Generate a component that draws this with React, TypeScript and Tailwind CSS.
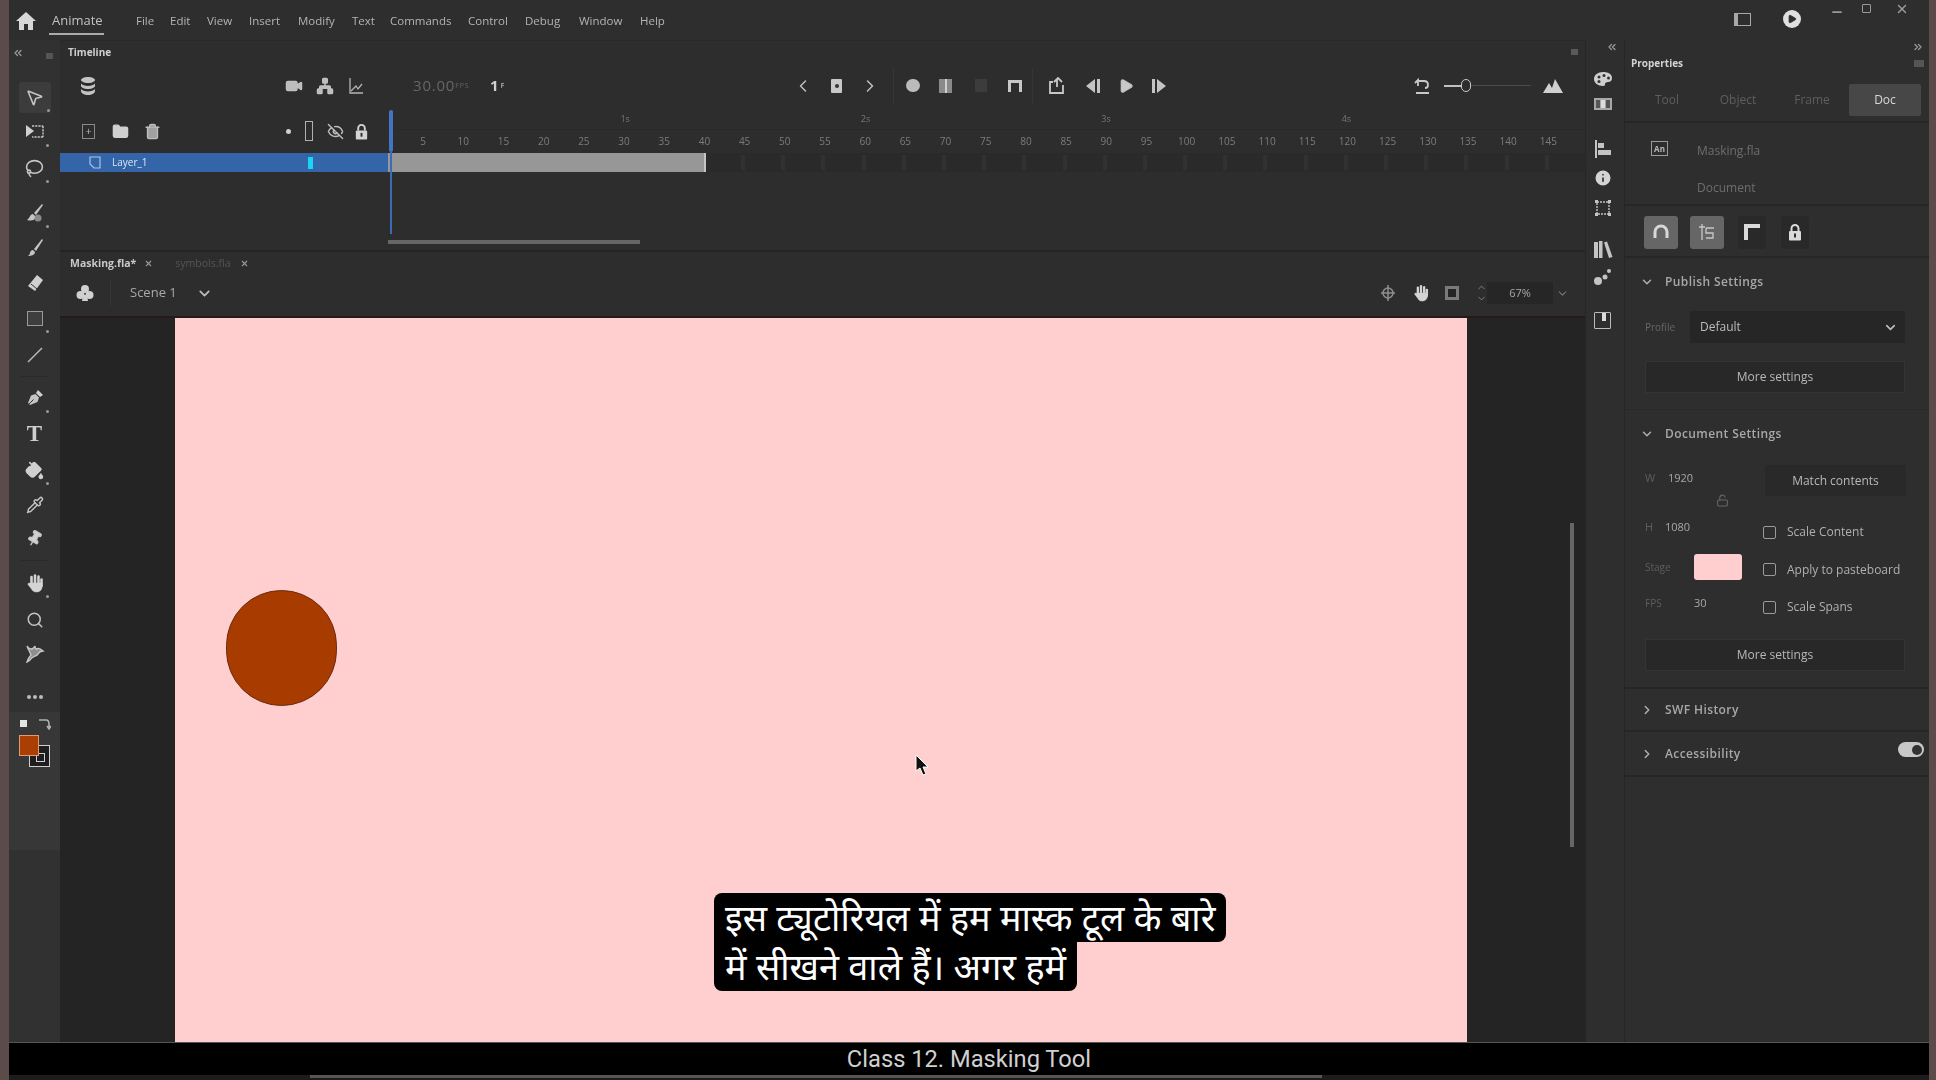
import {
  ChevronDown,
  ChevronLeft,
  ChevronRight,
  ChevronUp,
  ChevronsLeft,
  ChevronsRight,
  EyeOff,
  Folder,
  Info,
  Lasso,
  LockOpen,
  Minus,
  MousePointer2,
  Network,
  PaintBucket,
  Pin,
  Pipette,
  Play,
  Search,
  Trash2,
  Video,
  X,
} from "lucide-react"

const menus: [string, number][] = [
  ["File", 34],
  ["Edit", 37],
  ["View", 42],
  ["Insert", 49],
  ["Modify", 54],
  ["Text", 38],
  ["Commands", 78],
  ["Control", 57],
  ["Debug", 54],
  ["Window", 61],
  ["Help", 40],
]

const frameLabels = Array.from({ length: 29 }, (_, i) => (i + 1) * 5)
const seconds = ["1s", "2s", "3s", "4s"]
const ticks = Array.from({ length: 21 }, (_, i) => i)

function Tool({ gap, children, dot }: { gap: number; children: React.ReactNode; dot?: boolean }) {
  // gap = space above the 30px tool slot
  return (
    <div className="relative flex h-[30px] w-full shrink-0 items-center justify-center text-[#c4c4c4]" style={{ marginTop: gap }}>
      {children}
      {dot && <span className="absolute right-[11px] bottom-0 h-[3px] w-[3px] rounded-full bg-[#999]" />}
    </div>
  )
}

function BrushBlob() {
  return (
    <svg width="20" height="20" viewBox="0 0 20 20" fill="#c4c4c4">
      <path d="M17 1 9 10l2 2 7-10z" />
      <path d="M8 11c-3 0-3 4-6 6 3 1 8 1 9-3z" />
      <circle cx="13" cy="15" r="3.5" fill="#8a8a8a" />
    </svg>
  )
}

function BrushIcon() {
  return (
    <svg width="20" height="20" viewBox="0 0 20 20" fill="#c4c4c4">
      <path d="M17 1 9 11l2 2 7-11z" />
      <path d="M8 12c-2 0-3 2-3 3s-1 2-2 3c3 0 7-1 7-4z" />
    </svg>
  )
}

function EraserIcon() {
  return (
    <svg width="20" height="20" viewBox="0 0 20 20" fill="#d0d0d0">
      <path d="M12 2 18 7 10 18 3 13z" />
      <path d="M6 11 12 16" stroke="#333" strokeWidth="1" />
    </svg>
  )
}

function TransformIcon() {
  return (
    <svg width="20" height="20" viewBox="0 0 20 20" fill="none" stroke="#c4c4c4" strokeWidth="1.5">
      <path d="M7 4h11M18 4v11M18 15H7" strokeDasharray="2.2 1" />
      <path d="M1 3l8 6-8 6z" fill="#d0d0d0" stroke="none" />
    </svg>
  )
}

function PenNib() {
  return (
    <svg width="20" height="20" viewBox="0 0 20 20">
      <path d="M13 2 18 7 15 9 11 5z" fill="#d0d0d0" />
      <path d="M10.500 6 14 9.500 12.500 14 5 17 3 15 6 7.500z" fill="#c4c4c4" />
      <path d="M4 16 8.500 11.500" stroke="#333" strokeWidth="1" />
    </svg>
  )
}

function HandIcon({ size = 20 }: { size?: number }) {
  return (
    <svg width={size} height={size} viewBox="0 0 20 20" fill="#d4d4d4" stroke="#d4d4d4" strokeLinecap="round">
      <path d="M6.500 4v8M10 2.500V12M13.500 3.500V12M16.500 6.500V13" fill="none" strokeWidth="2.600" />
      <path d="M5.500 10h11.500v4c0 3-2.500 5-5.500 5-2.500 0-4-1-5-3L3 11.500c-.5-1 1-2 2-1z" strokeWidth="0.500" />
    </svg>
  )
}

function PuppetIcon() {
  return (
    <svg width="20" height="18" viewBox="0 0 20 18" fill="none" stroke="#c4c4c4" strokeWidth="1.4">
      <path d="M2 1c1 2 3 3 5 3 2-1 3-3 3-3s0 2 1 3c2-1 5 0 7 2-2 0-4 1-5 3-2 3-6 2-8 6l-3 2c1-3 2-5 4-7-1-3-3-6-4-9z" fill="#8f8f8f" />
    </svg>
  )
}

function LayersFilled() {
  return (
    <svg width="20" height="20" viewBox="0 0 20 20" fill="#c4c4c4">
      <path d="M10 1c4 0 7 1.500 7 3s-3 3-7 3-7-1.500-7-3 3-3 7-3z" />
      <path d="M3 7.500c1 1.500 4 2.500 7 2.500s6-1 7-2.500V10c0 1.500-3 3-7 3s-7-1.500-7-3z" />
      <path d="M3 13c1 1.500 4 2.500 7 2.500s6-1 7-2.500v2c0 2-3 4-7 4s-7-2-7-4z" />
    </svg>
  )
}

function GraphIcon() {
  return (
    <svg width="16" height="18" viewBox="0 0 16 18" fill="none" stroke="#b5b5b5" strokeWidth="1.3">
      <path d="M2 1v15h13" />
      <path d="M3 14 8 9l2 3 4-5" />
    </svg>
  )
}

function LockIcon({ fill = "#d4d4d4", size = 18 }: { fill?: string; size?: number }) {
  return (
    <svg width={size} height={size} viewBox="0 0 18 18">
      <path d="M5.500 8V5.500a3.500 3.500 0 0 1 7 0V8" fill="none" stroke={fill} strokeWidth="2" />
      <rect x="3" y="8" width="12" height="9.500" rx="1" fill={fill} />
      <rect x="8" y="10.500" width="2" height="4" fill="#2e2e2e" />
    </svg>
  )
}

function StepIcon({ flip }: { flip?: boolean }) {
  return (
    <svg width="16" height="18" viewBox="0 0 16 18" fill="#c4c4c4" className={flip ? "-scale-x-100" : ""}>
      <path d="M10 2 1 9l9 7z" />
      <rect x="12" y="2" width="3" height="14" />
    </svg>
  )
}

function PaletteIcon() {
  return (
    <svg width="20" height="18" viewBox="0 0 20 18">
      <path d="M10 2C5 2 1 5 1 9s4 7 9 7c2 0 2-1 2-2s1-2 3-2 4-1 4-4c0-4-4-6-9-6z" fill="#cfcfcf" />
      <circle cx="6" cy="7" r="1.500" fill="#333" />
      <circle cx="11" cy="5.500" r="1.500" fill="#333" />
      <circle cx="15.500" cy="8" r="1.500" fill="#333" />
      <circle cx="6" cy="11.500" r="1.500" fill="#333" />
    </svg>
  )
}

function BooksIcon() {
  return (
    <svg width="20" height="19" viewBox="0 0 20 19" fill="#c4c4c4">
      <rect x="1" y="2" width="4" height="16" />
      <rect x="6" y="1" width="3.500" height="17" />
      <path d="M11 2.500 14 1.500 19.500 17l-3.500 1z" />
    </svg>
  )
}

function IconBox({ active, dark, children }: { active?: boolean; dark?: boolean; children: React.ReactNode }) {
  return (
    <div
      className={`flex h-[33px] items-center justify-center rounded-[3px] ${
        active ? "w-[34px] bg-[#666]" : dark ? "w-[28px] bg-[#292929]" : "w-[28px]"
      }`}
    >
      {children}
    </div>
  )
}

function Check({ label }: { label: string }) {
  return (
    <div className="flex items-center">
      <span className="h-[13px] w-[13px] rounded-[2px] border-[1.5px] border-[#9a9a9a]" />
      <span className="ml-[11px] text-[12px] text-[#b0b0b0]">{label}</span>
    </div>
  )
}

function Section({ open, title }: { open?: boolean; title: string }) {
  return (
    <div className="flex items-center pl-[15px]">
      {open ? (
        <ChevronDown size={14} strokeWidth={2.5} className="text-[#b0b0b0]" />
      ) : (
        <ChevronRight size={14} strokeWidth={2.5} className="text-[#b0b0b0]" />
      )}
      <span className="ml-[11px] text-[12px] font-semibold tracking-[0.4px] text-[#a8a8a8]">{title}</span>
    </div>
  )
}

function MoreSettings() {
  return (
    <div className="ml-[20px] flex h-[32px] w-[260px] items-center justify-center border border-[#343434] bg-[#282828] text-[12px] text-[#b8b8b8]">
      More settings
    </div>
  )
}

export default function App() {
  return (
    <div className="relative h-screen w-screen overflow-hidden bg-[#5b4b4b] font-['Open_Sans',sans-serif]">
      <div className="mx-[9px] flex h-[1042px] w-[1920px] flex-col bg-[#2e2e2e] blur-[0.7px]">
        {/* MENU BAR */}
        <div className="flex h-[40px] shrink-0 items-center pt-[2px] text-[11.5px] text-[#b4b4b4]">
          <svg width="20" height="18" viewBox="0 0 20 18" className="ml-[7px]" fill="#d8d8d8">
            <path d="M10 0 0 9h3v9h5v-6h4v6h5V9h3z" />
          </svg>
          <div className="relative ml-[16px] w-[84px] text-[13px] text-[#c0c0c0]">
            Animate
            <span className="absolute top-[22px] -left-[3px] h-[2px] w-[55px] bg-[#aaa]" />
          </div>
          {menus.map(([name, w]) => (
            <div key={name} style={{ width: w }}>
              {name}
            </div>
          ))}
          <div className="flex-1" />
          <div className="relative h-[40px] w-[195px] text-[#bdbdbd]">
            <div className="absolute top-[12px] left-[0px] h-[13px] w-[17px] border border-[#a8a8a8] border-l-[4px]" />
            <div className="absolute top-[9px] left-[49px] flex h-[18px] w-[18px] items-center justify-center rounded-full bg-[#e0e0e0]">
              <Play size={10} fill="#2e2e2e" stroke="#2e2e2e" />
            </div>
            <Minus size={14} strokeWidth={3} className="absolute top-[4px] left-[96px] text-[#999]" />
            <div className="absolute top-[3px] left-[128px] h-[9px] w-[9px] rounded-[1px] border-[1.5px] border-[#999]" />
            <X size={14} strokeWidth={2.5} className="absolute top-[1px] left-[161px] text-[#999]" />
            <div className="absolute -top-[2px] left-[90px] h-px w-[100px] bg-[#777]" />
          </div>
        </div>

        <div className="flex flex-1 overflow-hidden">
          {/* TOOLS */}
          <div className="flex w-[51px] shrink-0 flex-col items-center bg-[#313131]">
            <div className="flex h-[22px] w-full items-end pb-[3px] pl-[3px] text-[#9a9a9a]">
              <ChevronsLeft size={12} strokeWidth={2.5} />
              <span className="ml-[22px] h-[6px] w-[7px] bg-[#555]" />
            </div>
            <div className="relative mt-[20px] flex h-[31px] w-[32px] shrink-0 items-center justify-center rounded-[3px] bg-[#3c3c3c]">
              <MousePointer2 size={19} className="text-[#c4c4c4]" />
              <span className="absolute right-[1px] bottom-[1px] h-[3px] w-[3px] rounded-full bg-[#999]" />
            </div>
            <Tool gap={4} dot><TransformIcon /></Tool>
            <Tool gap={6} dot><Lasso size={19} /></Tool>
            <Tool gap={15} dot><BrushBlob /></Tool>
            <Tool gap={5}><BrushIcon /></Tool>
            <Tool gap={5}><EraserIcon /></Tool>
            <Tool gap={5} dot>
              <span className="h-[15px] w-[16px] border-[1.5px] border-[#9a9a9a] bg-[#3e3e3e]" />
            </Tool>
            <Tool gap={7}>
              <svg width="18" height="18" viewBox="0 0 18 18" stroke="#bbb" strokeWidth="1.4">
                <path d="M2 16 16 2" />
              </svg>
            </Tool>
            <div className="mt-[6px] h-px w-[28px] shrink-0 bg-[#2a2a2a]" />
            <Tool gap={6} dot><PenNib /></Tool>
            <Tool gap={5}>
              <span className="font-['Liberation_Serif',serif] text-[23px] leading-none font-bold text-[#cfcfcf]">T</span>
            </Tool>
            <Tool gap={7} dot><PaintBucket size={19} fill="#d0d0d0" stroke="#d0d0d0" /></Tool>
            <Tool gap={5}><Pipette size={18} /></Tool>
            <Tool gap={3}><Pin size={17} fill="#d0d0d0" className="rotate-[30deg]" /></Tool>
            <div className="mt-[7px] h-px w-[28px] shrink-0 bg-[#2a2a2a]" />
            <Tool gap={7} dot><HandIcon /></Tool>
            <Tool gap={7}><Search size={18} /></Tool>
            <Tool gap={4}><PuppetIcon /></Tool>
            <Tool gap={13}>
              <div className="flex gap-[2px]">
                <span className="h-[4px] w-[4px] rounded-full bg-[#bbb]" />
                <span className="h-[4px] w-[4px] rounded-full bg-[#bbb]" />
                <span className="h-[4px] w-[4px] rounded-full bg-[#bbb]" />
              </div>
            </Tool>
            <div className="flex w-full flex-1 flex-col items-center bg-[#373737] pt-[5px]">
              <div className="flex w-full items-center pl-[11px]">
                <span className="h-[7px] w-[7px] bg-[#e4e4e4]" />
                <svg width="13" height="13" viewBox="0 0 13 13" className="ml-[11px]" fill="none" stroke="#b0b0b0" strokeWidth="1.6">
                  <path d="M1 3h7c2 0 3 2 3 4v4M9 9l2 3 2-3" />
                </svg>
              </div>
              <div className="relative mt-[5px] h-[32px] w-[32px] shrink-0">
                <span className="absolute top-[10px] left-[10px] h-[22px] w-[21px] border border-[#cfcfcf] bg-[#1e1e1e]">
                  <span className="absolute top-[7px] left-[6px] block h-[9px] w-[9px] border border-[#cfcfcf]" />
                </span>
                <span className="absolute top-0 left-0 h-[21px] w-[20px] border border-[#e39a70] bg-[#ab3f03]" />
              </div>
              <div className="mt-[83px] h-full w-full bg-[#313131]" />
            </div>
          </div>

          {/* CENTER */}
          <div className="relative flex w-[1525px] shrink-0 flex-col">
            {/* TIMELINE */}
            <div className="relative flex h-[212px] shrink-0 flex-col border-b-2 border-[#242424] border-t border-t-[#292929] bg-[#2d2d2d]">
              <div className="flex h-[22px] items-center justify-between pl-[8px] pr-[7px]">
                <span className="text-[10px] font-bold text-[#cfcfcf]">Timeline</span>
                <span className="h-[6px] w-[7px] bg-[#5a5a5a]" />
              </div>
              <div className="flex h-[45px] items-center text-[#c0c0c0]">
                <div className="ml-[18px]"><LayersFilled /></div>
                <Video size={18} fill="#bdbdbd" className="ml-[187px]" />
                <Network size={18} fill="#bdbdbd" className="ml-[13px]" />
                <div className="ml-[14px]"><GraphIcon /></div>
                <span className="ml-[49px] w-[59px] text-[15px] tracking-[0.8px] whitespace-nowrap text-[#666]">
                  30.00<sup className="text-[7px]">FPS</sup>
                </span>
                <span className="ml-[18px] w-[18px] text-[15px] font-bold text-[#d0d0d0]">
                  1<sup className="ml-[2px] text-[7px] text-[#999]">F</sup>
                </span>
                <ChevronLeft size={20} strokeWidth={1.8} className="ml-[285px]" />
                <div className="ml-[18px] flex h-[14px] w-[11px] items-center justify-center rounded-[1px] bg-[#c8c8c8]">
                  <span className="h-[4px] w-[4px] rounded-full bg-[#333]" />
                </div>
                <ChevronRight size={20} strokeWidth={1.8} className="ml-[18px]" />
                <div className="ml-[13px] flex h-[36px] items-center border-x border-[#353535] pl-[12px] pr-[10px]">
                  <span className="h-[13px] w-[14px] rounded-full bg-[#bbb]" />
                  <span className="ml-[19px] flex h-[14px] w-[13px] justify-center bg-[#8a8a8a]">
                    <span className="h-full w-[2px] bg-[#d0d0d0]" />
                  </span>
                  <span className="ml-[23px] h-[13px] w-[12px] bg-[#3c3c3c]" />
                  <span className="ml-[21px] h-[12px] w-[14px] border-[3px] border-b-0 border-[#c8c8c8]" />
                </div>
                <svg width="18" height="18" viewBox="0 0 18 18" className="ml-[15px]" fill="none" stroke="#c8c8c8" strokeWidth="1.8">
                  <path d="M5 5H2v11h13V8M9 10V2M6 5l4-4 4 4" />
                </svg>
                <div className="ml-[19px]"><StepIcon /></div>
                <Play size={16} fill="#c8c8c8" className="ml-[17px]" />
                <div className="ml-[17px]"><StepIcon flip /></div>
                <svg width="18" height="18" viewBox="0 0 18 18" className="ml-[246px]" fill="none" stroke="#c8c8c8" strokeWidth="1.8">
                  <path d="M3 16h13M5 9V3l-3 3M5 4h6c3 0 4 2 4 4s-1 3-3 3" />
                </svg>
                <span className="ml-[13px] h-[2px] w-[17px] bg-[#c0c0c0]" />
                <span className="h-[13px] w-[10px] rounded-full border-[1.5px] border-[#c8c8c8]" />
                <span className="h-px w-[60px] bg-[#4a4a4a]" />
                <svg width="20" height="14" viewBox="0 0 20 14" className="ml-[12px]" fill="#d0d0d0">
                  <path d="M0 14 6 4l3 5 3-9 8 14z" />
                </svg>
              </div>
              <div className="flex h-[45px]">
                <div className="flex w-[328px] items-center pt-[1px] text-[#bdbdbd]">
                  <div className="ml-[22px] flex h-[15px] w-[13px] items-center justify-center border border-[#8a8a8a] text-[10px] leading-none">+</div>
                  <Folder size={17} fill="#d0d0d0" stroke="#d0d0d0" className="ml-[17px]" />
                  <Trash2 size={17} fill="#a0a0a0" className="ml-[15px]" />
                  <span className="ml-[125px] h-[5px] w-[5px] rounded-full bg-[#d0d0d0]" />
                  <span className="ml-[14px] h-[20px] w-[8px] border border-[#b0b0b0]" />
                  <EyeOff size={17} className="ml-[14px]" />
                  <div className="ml-[9px]"><LockIcon size={17} /></div>
                </div>
                <div className="flex-1">
                  <div className="flex h-[22px] border-b border-[#292929] pl-[117px] pt-[4px]">
                    {seconds.map((s) => (
                      <span key={s} className="w-[240.4px] text-center text-[9px] text-[#777]">
                        {s}
                      </span>
                    ))}
                  </div>
                  <div className="flex pl-[15px] pt-[4px]">
                    {frameLabels.map((n) => (
                      <span key={n} className="w-[40.2px] shrink-0 text-center text-[10px] text-[#7c7c7c]">
                        {n}
                      </span>
                    ))}
                  </div>
                </div>
              </div>
              <div className="flex h-[19px]">
                <div className="flex w-[328px] items-center bg-[#3465a8]">
                  <svg width="12" height="13" viewBox="0 0 12 13" className="ml-[29px]" fill="none" stroke="#a8c4ea" strokeWidth="1.2">
                    <path d="M1 1h10v11H5L1 8z" />
                  </svg>
                  <span className="ml-[11px] text-[10px] text-[#dbe6f5]">Layer_1</span>
                  <span className="ml-[160px] h-[12px] w-[5px] bg-[#19d5f5]" />
                </div>
                <div className="h-full w-[318px] border-r-2 border-[#c4c4c4] bg-[#979797]" />
                <div className="flex bg-[#2a2a2a] pl-[35px]">
                  {ticks.map((t) => (
                    <div key={t} className="w-[40.2px] shrink-0 py-[2px]">
                      <div className="h-full w-[4px] bg-[#313131]" />
                    </div>
                  ))}
                </div>
              </div>
              <div className="flex-1" />
              <div className="ml-[328px] mb-[6px] h-[4px] w-[252px] bg-[#666]" />
              {/* playhead */}
              <div className="absolute top-[69px] left-[329px] h-[42px] w-[4px] rounded-[2px] bg-[#4274c4]" />
              <div className="absolute top-[111px] left-[330px] h-[82px] w-[2px] bg-[#3d6bb5]" />
            </div>

            {/* DOCUMENT TABS */}
            <div className="flex h-[26px] shrink-0 items-center bg-[#2d2d2d] pb-[3px] pl-[10px] text-[10.5px]">
              <span className="font-bold text-[#c8c8c8]">Masking.fla*</span>
              <X size={9} strokeWidth={3} className="ml-[8px] text-[#999]" />
              <span className="ml-[22px] text-[#555]">symbols.fla</span>
              <X size={9} strokeWidth={3} className="ml-[9px] text-[#999]" />
            </div>
            <div className="flex h-[38px] shrink-0 items-center bg-[#2d2d2d] pb-[8px] text-[#bdbdbd]">
              <svg width="20" height="20" viewBox="0 0 20 20" className="ml-[15px]" fill="#d0d0d0">
                <circle cx="10" cy="6" r="4" />
                <circle cx="5.500" cy="12" r="4" />
                <circle cx="14.500" cy="12" r="4" />
                <path d="M8 12h4l1 6H7z" />
              </svg>
              <span className="ml-[15px] h-[26px] w-px bg-[#353535]" />
              <span className="ml-[19px] w-[66px] text-[13px] text-[#a8a8a8]">Scene 1</span>
              <ChevronDown size={17} strokeWidth={2.4} />
              <div className="flex-1" />
              <svg width="16" height="18" viewBox="0 0 16 18" fill="none" stroke="#8f8f8f" strokeWidth="1.5">
                <circle cx="8" cy="9" r="5" />
                <path d="M8 1v16M1 9h14" />
              </svg>
              <div className="ml-[16px]"><HandIcon size={18} /></div>
              <span className="ml-[15px] flex h-[14px] w-[14px] items-center justify-center bg-[#7a7a7a]">
                <span className="h-[8px] w-[8px] bg-[#252525]" />
              </span>
              <div className="ml-[17px] flex flex-col text-[#888]">
                <ChevronUp size={11} strokeWidth={2} />
                <ChevronDown size={11} strokeWidth={2} />
              </div>
              <div className="flex h-[22px] w-[66px] items-center justify-center bg-[#262626] text-[11px] text-[#a8a8a8]">
                67%
              </div>
              <ChevronDown size={13} className="ml-[3px] mr-[16px] text-[#777]" />
            </div>

            {/* STAGE */}
            <div className="relative flex flex-1 border-t-2 border-[#26191b] bg-[#242424] pl-[115px]">
              <div className="relative w-[1292px] bg-[#ffcfcf]">
                <span className="absolute top-[272px] left-[51px] h-[116px] w-[111px] rounded-full border border-[#6b2a12] bg-[#a83c00]" />
              </div>
              <div className="absolute top-[205px] left-[1510px] h-[324px] w-[4px] bg-[#666]" />
            </div>
          </div>

          {/* ICON RAIL */}
          <div className="flex w-[40px] shrink-0 flex-col items-center border-x border-[#262626] bg-[#2e2e2e] pr-[5px] text-[#c4c4c4]">
            <ChevronsLeft size={12} strokeWidth={2.5} className="mt-[1px] ml-[19px] text-[#999]" />
            <div className="mt-[17px]"><PaletteIcon /></div>
            <div className="mt-[10px] grid h-[12px] w-[18px] grid-cols-3 gap-px bg-[#a8a8a8] p-[2px]">
              <span className="bg-[#555]" />
              <span className="bg-[#ddd]" />
              <span className="bg-[#555]" />
            </div>
            <svg width="18" height="18" viewBox="0 0 18 18" fill="#c4c4c4" className="mt-[30px]">
              <path d="M1 0h2v18H1zM4 3h6v5H4zM4 10h13v5H4z" />
            </svg>
            <Info size={20} fill="#d4d4d4" stroke="#2e2e2e" className="mt-[10px]" />
            <svg width="18" height="18" viewBox="0 0 18 18" fill="none" stroke="#c4c4c4" strokeWidth="1.4" className="mt-[11px]">
              <rect x="3" y="3" width="12" height="12" strokeDasharray="2 1" />
              <path d="M1 1h3v3H1zM14 1h3v3h-3zM1 14h3v3H1zM14 14h3v3h-3z" fill="#c4c4c4" stroke="none" />
            </svg>
            <div className="mt-[23px]"><BooksIcon /></div>
            <svg width="18" height="20" viewBox="0 0 18 20" fill="#c4c4c4" className="mt-[8px]">
              <circle cx="4" cy="14" r="4" />
              <circle cx="11" cy="10" r="2.500" />
              <circle cx="15" cy="4" r="2" />
            </svg>
            <div className="relative mt-[25px] h-[17px] w-[17px] rounded-[1px] border-[1.5px] border-[#bbb]">
              <span className="absolute top-0 left-[7px] h-[8px] w-[4px] bg-[#ddd]" />
            </div>
          </div>

          {/* PROPERTIES */}
          <div className="w-[304px] shrink-0 bg-[#2e2e2e]">
            <div className="flex h-[14px] justify-end pr-[5px] pt-[1px] text-[#999]">
              <ChevronsRight size={12} strokeWidth={2.5} />
            </div>
            <div className="flex h-[18px] items-center justify-between pl-[6px] pr-[5px]">
              <span className="text-[10px] font-bold text-[#d4d4d4]">Properties</span>
              <span className="h-[7px] w-[10px] bg-[#555]" />
            </div>
            <div className="flex h-[51px] items-start border-b-2 border-[#262626] pl-[2px] pt-[12px] text-[12px] text-[#5e5e5e]">
              <span className="flex h-[32px] w-[74px] items-center justify-center pl-[6px]">Tool</span>
              <span className="flex h-[32px] w-[74px] items-center justify-center">Object</span>
              <span className="flex h-[32px] w-[74px] items-center justify-center">Frame</span>
              <span className="flex h-[32px] w-[72px] items-center justify-center rounded-[2px] bg-[#474747] text-[#d8d8d8]">Doc</span>
            </div>
            <div className="relative h-[83px] border-b-2 border-[#262626] text-[12px] text-[#6e6e6e]">
              <span className="absolute top-[18px] left-[26px] flex h-[15px] w-[17px] items-center justify-center border border-[#9a9a9a] text-[8px] font-bold text-[#bbb]">An</span>
              <div className="pt-[19px] pl-[72px]">Masking.fla</div>
              <div className="pt-[19px] pl-[72px]">Document</div>
            </div>
            <div className="flex h-[52px] items-center gap-[12px] border-b-2 border-[#262626] pt-[2px] pl-[19px]">
              <IconBox active>
                <svg width="18" height="18" viewBox="0 0 18 18" fill="none" stroke="#d8d8d8" strokeWidth="3">
                  <path d="M3 15V9a6 6 0 0 1 12 0v6" />
                </svg>
              </IconBox>
              <IconBox active>
                <svg width="18" height="18" viewBox="0 0 18 18" fill="none" stroke="#c8c8c8" strokeWidth="1.3">
                  <path d="M4 1v16M1 4h6M8 5h8M8 5v5h7v5H8" />
                </svg>
              </IconBox>
              <div className="ml-[2px]">
                <IconBox dark>
                  <svg width="18" height="18" viewBox="0 0 18 18" fill="#dadada">
                    <path d="M1 1h16v4H5v12H1z" />
                  </svg>
                </IconBox>
              </div>
              <div className="ml-[3px]">
                <IconBox dark>
                  <LockIcon fill="#dadada" />
                </IconBox>
              </div>
            </div>
            <div className="h-[152px] border-b border-[#292929] pt-[15px]">
              <Section open title="Publish Settings" />
              <div className="mt-[20px] flex items-center pl-[20px]">
                <span className="w-[45px] text-[10px] text-[#666]">Profile</span>
                <div className="flex h-[32px] w-[215px] items-center justify-between bg-[#262626] pl-[10px] pr-[7px] text-[12px] text-[#bdbdbd]">
                  Default
                  <ChevronDown size={15} strokeWidth={2.6} />
                </div>
              </div>
              <div className="mt-[18px]">
                <MoreSettings />
              </div>
            </div>
            <div className="h-[279px] border-b-2 border-[#262626] pt-[15px]">
              <Section open title="Document Settings" />
              <div className="mt-[24px] flex">
                <div className="relative ml-[20px] w-[120px] text-[11px] text-[#a8a8a8]">
                  <div className="flex h-[22px] items-center">
                    <span className="w-[23px] text-[#5e5e5e]">W</span>1920
                  </div>
                  <LockOpen size={13} className="absolute top-[27px] left-[71px] text-[#666]" />
                  <div className="mt-[27px] flex h-[22px] items-center">
                    <span className="w-[20px] text-[#5e5e5e]">H</span>1080
                  </div>
                  <div className="mt-[16px] flex h-[26px] items-center">
                    <span className="w-[49px] text-[10px] text-[#5e5e5e]">Stage</span>
                    <span className="h-[26px] w-[48px] rounded-[3px] bg-[#ffcfcf]" />
                  </div>
                  <div className="mt-[12px] flex h-[22px] items-center">
                    <span className="w-[49px] text-[10px] text-[#5e5e5e]">FPS</span>30
                  </div>
                </div>
                <div className="flex flex-col">
                  <div className="-mt-[2px] flex h-[31px] w-[141px] items-center justify-center bg-[#292929] text-[12px] text-[#b8b8b8]">
                    Match contents
                  </div>
                  <div className="mt-[27px] -ml-[2px] flex flex-col gap-[19.5px]">
                    <Check label="Scale Content" />
                    <Check label="Apply to pasteboard" />
                    <Check label="Scale Spans" />
                  </div>
                </div>
              </div>
              <div className="mt-[23px]">
                <MoreSettings />
              </div>
            </div>
            <div className="flex h-[43px] items-center border-b-2 border-[#262626]">
              <Section title="SWF History" />
            </div>
            <div className="relative flex h-[45px] items-center border-b-2 border-[#262626]">
              <Section title="Accessibility" />
              <span className="absolute top-[10px] left-[273px] flex h-[15px] w-[26px] items-center justify-end rounded-full bg-[#c8c8c8] pr-[2px]">
                <span className="h-[10px] w-[10px] rounded-full bg-[#333]" />
              </span>
            </div>
          </div>
        </div>
      </div>

      {/* BOTTOM BAR */}
      <div className="ml-[9px] flex h-[33px] w-[1920px] items-center justify-center border-t border-[#555] bg-black pt-[2px] font-['Roboto',sans-serif] text-[23.7px] text-[#d0d0d0]">
        Class 12. Masking Tool
      </div>
      <div className="ml-[9px] h-[5px] w-[1920px] bg-[#1c1c1c] pl-[301px]">
        <div className="h-[3px] w-[1012px] bg-[#555]" />
      </div>

      {/* CAPTION */}
      <div className="absolute top-[893px] left-[714px] font-['Noto_Sans',sans-serif] text-[36px] leading-[49px] text-white">
        <div className="w-fit rounded-[8px] rounded-bl-none bg-black px-[11px]">इस ट्यूटोरियल में हम मास्क टूल के बारे</div>
        <div className="w-fit rounded-[8px] rounded-tl-none rounded-tr-none bg-black px-[11px]">में सीखने वाले हैं। अगर हमें</div>
      </div>

      {/* CURSOR */}
      <svg width="14" height="22" viewBox="0 0 14 22" className="absolute top-[754px] left-[915px]">
        <path d="M1 1v16l4-3 3 7 3-1-3-7h5z" fill="#111" stroke="#fff" strokeWidth="1" />
      </svg>
    </div>
  )
}
